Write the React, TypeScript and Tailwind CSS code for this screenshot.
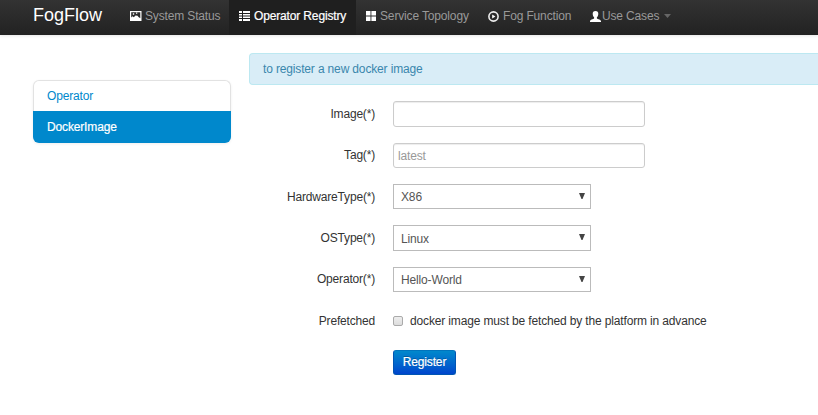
import type { ReactNode } from "react";

function NavItem({ icon, label, className, labelClass }: { icon: ReactNode; label: string; className: string; labelClass: string }) {
  return (
    <a href="#" className={`flex h-[35px] shrink-0 items-center pb-[3px] ${className}`}>
      {icon}
      <span className={`whitespace-nowrap ${labelClass}`}>{label}</span>
    </a>
  );
}

const PictureIcon = () => (
  <svg className="shrink-0" width="12" height="10" viewBox="0 0 12 10">
    <path fill="#fff" fillRule="evenodd" d="M0 0h11.5v10H0zM1.200 1.200v5.300l1.300-1.300 1.300 1 1.700-1.700 2 .3 1 1.300 1.800 1.200V1.200z" />
    <path fill="#fff" d="M2.800 2.200h1.400v1.500H2.800zM6 1.500h1.300v1.300H6z" />
  </svg>
);
const ListIcon = () => (
  <svg className="shrink-0" width="11" height="10" viewBox="0 0 11 10">
    <path fill="#fff" d="M0 0h3v2H0zM4 0h7v2H4zM0 3h3v1.600H0zM4 3h7v1.600H4zM0 5.500h3v1.600H0zM4 5.500h7v1.600H4zM0 8h3v2H0zM4 8h7v2H4z" />
  </svg>
);
const GridIcon = () => (
  <svg className="shrink-0" width="10" height="10" viewBox="0 0 10 10">
    <path fill="#fff" d="M0 0h4.500v4.400H0zM5.400 0H10v4.400H5.400zM0 5.500h4.500V10H0zM5.400 5.500H10V10H5.400z" />
  </svg>
);
const PlayIcon = () => (
  <svg className="shrink-0" width="11" height="11" viewBox="0 0 11 11">
    <circle cx="5.5" cy="5.5" r="4.6" fill="none" stroke="#eee" strokeWidth="1.6" />
    <path fill="#fff" d="M4.200 3.600l3.200 1.900-3.200 1.900z" />
  </svg>
);
const UserIcon = () => (
  <svg className="shrink-0" width="11" height="11" viewBox="0 0 11 11">
    <path fill="#fff" d="M5.500 0C3.500 0 2.600 1.200 2.700 3c.1 1.500.6 2.600 1.400 3.300v1.200C3.200 8.300 0 8.500 0 10.300V11h11v-.700c0-1.800-3.200-2-4.100-2.800V6.300C7.700 5.600 8.200 4.500 8.300 3 8.400 1.200 7.500 0 5.500 0z" />
  </svg>
);

function Row({ label, className, labelClass = "", children }: { label: string; className: string; labelClass?: string; children: ReactNode }) {
  return (
    <div className={`flex items-center ${className}`}>
      <span className={`mr-[18px] w-[126px] whitespace-nowrap text-right tracking-[-0.18px] ${labelClass}`}>{label}</span>
      {children}
    </div>
  );
}

function SelectBox({ value, valueClass = "" }: { value: string; valueClass?: string }) {
  return (
    <button className="flex h-full w-[198px] items-center justify-between border border-[#bbb] bg-white pl-[7px] pr-[5px] text-[#555]">
      <span className={valueClass}>{value}</span>
      <svg width="6" height="6" viewBox="0 0 6 6" className="mb-[2px]">
        <path d="M0 0h6L3.500 6h-1z" fill="#444" />
      </svg>
    </button>
  );
}

const inputClass =
  "h-full w-[252px] rounded-[3px] border border-[#ccc] bg-white px-[4px] text-[#555] shadow-[inset_0_1px_1px_rgba(0,0,0,0.075)] outline-none placeholder:text-[#999]";

export default function App() {
  return (
    <div className="h-[415px] w-[818px] overflow-hidden bg-white font-['Liberation_Sans',Arial,sans-serif] text-[12px] leading-[18px] tracking-[-0.15px] text-[#333]">
      <header className="flex h-[35px] bg-linear-to-b from-[#333] to-[#222] text-[#999] shadow-[0_1px_3px_rgba(0,0,0,0.1)]">
        <a href="#" className="ml-[33px] flex h-[35px] w-[97px] items-center pb-[5px] text-[18px] tracking-normal text-white">FogFlow</a>
        <NavItem className="w-[99px]" icon={<PictureIcon />} label="System Status" labelClass="ml-[3px]" />
        <NavItem className="w-[127px] bg-[#1f1f1f] pl-[10px] text-white" icon={<ListIcon />} label="Operator Registry" labelClass="ml-[4px] [-webkit-text-stroke:0.2px_white]" />
        <NavItem className="w-[122px] pl-[10px]" icon={<GridIcon />} label="Service Topology" labelClass="ml-[4px]" />
        <NavItem className="w-[102px] pl-[10px]" icon={<PlayIcon />} label="Fog Function" labelClass="ml-[4px]" />
        <NavItem className="pl-[10px]" icon={<UserIcon />} label="Use Cases" labelClass="ml-[1px]" />
        <svg width="7" height="4" viewBox="0 0 7 4" className="ml-[5px] mt-[14px]">
          <path d="M0 0h7L3.500 4z" fill="#666" />
        </svg>
      </header>

      <main className="flex">
        <nav className="ml-[33px] mt-[45px] h-[63px] w-[198px] shrink-0 rounded-[6px] shadow-[0_1px_3px_rgba(0,0,0,0.07)]">
          <a href="#" className="flex h-[31px] items-center rounded-t-[6px] border border-b-0 border-[#e2e2e2] pl-[13px] text-[#08c]">Operator</a>
          <a href="#" className="flex h-[32px] items-center rounded-b-[6px] bg-[#08c] pl-[14px] text-white [-webkit-text-stroke:0.2px_white]">DockerImage</a>
        </nav>

        <section className="ml-[18px] mt-[18px] w-[569px] shrink-0">
          <div className="flex h-[32px] items-center rounded-l-[4px] border border-r-0 border-[#bce8f1] bg-[#d9edf7] pl-[13px] text-[#3a87ad]">
            to register a new docker image
          </div>
          <form className="mt-[16px]" onSubmit={(e) => e.preventDefault()}>
            <Row label="Image(*)" className="h-[26px]">
              <input className={inputClass} />
            </Row>
            <Row label="Tag(*)" className="mt-[16px] h-[25px]" labelClass="pb-[1px]">
              <input className={inputClass} placeholder="latest" />
            </Row>
            <Row label="HardwareType(*)" className="mt-[16px] h-[25px]">
              <SelectBox value="X86" />
            </Row>
            <Row label="OSType(*)" className="mt-[16px] h-[26px]">
              <SelectBox value="Linux" valueClass="pt-[2px]" />
            </Row>
            <Row label="Operator(*)" className="mt-[16px] h-[25px]" labelClass="pb-[1px]">
              <SelectBox value="Hello-World" />
            </Row>
            <Row label="Prefetched" className="mt-[16px] h-[25px]">
              <input type="checkbox" className="h-[10px] w-[10px] appearance-none rounded-[2px] border border-[#aaa] bg-linear-to-b from-[#eee] to-[#ddd]" />
              <span className="ml-[7px] whitespace-nowrap">docker image must be fetched by the platform in advance</span>
            </Row>
            <button className="ml-[144px] mt-[17px] flex h-[25px] w-[63px] items-center justify-center rounded-[3px] border border-[#0055b3] border-t-[#0074bd] bg-linear-to-b from-[#08c] to-[#04c] pb-[1px] text-white [-webkit-text-stroke:0.2px_white] [text-shadow:0_-1px_0_rgba(0,0,0,0.25)]">
              Register
            </button>
          </form>
        </section>
      </main>
    </div>
  );
}
